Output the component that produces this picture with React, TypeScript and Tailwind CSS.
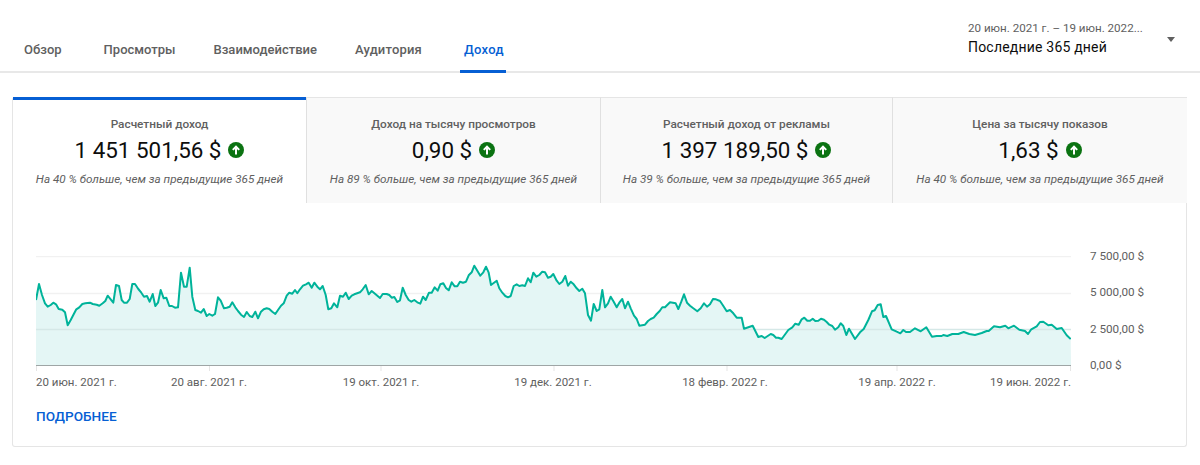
const seg1 = [[108,150],[117,102],[126,135],[135,160],[143,170],[152,165],[160,158],[168,163],[176,177],[187,179],[195,187],[203,226],[212,210],[220,195],[229,178],[238,172],[247,162],[256,160],[270,158],[278,162],[290,164],[298,167],[308,160],[316,153],[323,137],[332,148],[340,158],[348,105],[357,108],[365,150],[372,158],[381,158],[389,147],[397,102],[405,102],[415,117],[424,128],[432,140],[441,138],[449,155],[458,132],[466,168],[474,158],[482,120],[491,145],[499,143],[508,168],[516,168],[525,173],[534,172],[543,68],[552,110],[560,110],[569,53],[577,140],[586,180],[594,183],[603,188],[611,177],[620,198],[628,192],[637,197],[645,192],[654,142],[662,152],[672,175],[680,173],[689,170],[697,157],[706,172],[714,183],[723,194],[732,201],[740,186],[749,198],[757,201],[766,185],[774,205],[783,185],[791,178],[800,175],[808,177],[817,185],[826,192],[834,180],[843,167],[851,160],[860,137],[868,128],[877,131],[885,120],[892,130],[900,118],[909,107],[918,103],[926,98],[935,113],[943,98],[952,110],[960,118],[968,108],[977,135],[985,178],[994,175],[1002,160],[1012,172],[1020,137],[1029,140],[1037,128],[1046,147],[1055,137],[1063,133],[1080,127]];
const seg2 = [[8,118],[17,105],[26,133],[35,123],[45,131],[60,144],[68,132],[80,132],[88,135],[95,143],[103,141],[112,156],[120,151],[128,113],[137,135],[146,150],[154,155],[163,150],[172,157],[181,161],[189,140],[197,150],[207,128],[215,128],[224,112],[233,122],[241,103],[250,100],[258,114],[266,121],[275,97],[284,109],[292,109],[300,95],[309,98],[318,95],[326,76],[335,67],[343,47],[352,62],[361,77],[370,67],[378,50],[386,68],[393,105],[410,92],[418,115],[427,128],[436,138],[444,142],[452,138],[461,108],[470,103],[478,108],[487,106],[495,108],[504,85],[512,97],[520,68],[529,80],[538,75],[547,65],[555,67],[564,83],[572,80],[580,72],[590,92],[598,102],[607,95],[616,78],[624,107],[632,95],[641,103],[650,115],[658,123],[667,116],[675,130],[684,195],[693,212],[701,162],[710,183],[718,178],[727,120],[735,172],[744,160],[752,140],[761,155],[770,172],[778,158],[787,147],[795,175],[804,155],[812,175],[822,197],[830,207],[838,227],[855,224],[864,213],[872,207],[881,203],[890,192],[899,183],[907,172],[915,172],[930,157],[947,160],[955,177],[964,155],[972,133],[981,158],[990,167],[1000,175],[1012,184],[1022,175],[1032,160],[1041,170],[1050,163],[1059,147],[1068,148],[1080,153]];
const seg3 = [[8,165],[20,184],[30,180],[40,190],[50,203],[65,203],[72,236],[98,227],[115,261],[125,258],[134,264],[152,252],[160,255],[168,263],[175,263],[185,267],[205,240],[217,232],[226,221],[236,224],[245,208],[253,203],[262,212],[270,212],[278,206],[286,213],[295,212],[303,206],[312,209],[320,216],[328,224],[337,228],[345,239],[355,232],[362,220],[370,228],[379,255],[387,236],[405,267],[420,247],[431,237],[445,210],[456,184],[464,181],[473,165],[482,163],[490,201],[498,198],[515,238],[530,245],[541,250],[550,240],[558,246],[570,246],[585,235],[602,244],[619,232],[636,260],[650,258],[665,258],[670,255],[682,258],[697,252],[715,252],[731,246],[748,252],[765,255],[785,249],[800,243],[806,243],[822,229],[840,232],[856,227],[865,235],[882,227],[898,239],[915,243],[924,252],[934,238],[950,229],[960,216],[970,215],[985,226],[995,224],[1010,237],[1025,234],[1040,256],[1052,267]];

// traced from the screenshot, svg origin is page (36, 256)
const toPoint = (offset: number) => ([x, y]: number[]) =>
  `${(x / 3 + offset - 36).toFixed(1)},${(y / 3 - 6).toFixed(1)}`;

const linePoints = [...seg1.map(toPoint(0)), ...seg2.map(toPoint(360)), ...seg3.map(toPoint(720))].join(' ');

const navTabs = [
  { label: 'Обзор', cls: 'px-[12px] border-transparent text-[#606060]' },
  { label: 'Просмотры', cls: 'ml-[4px] px-[12px] border-transparent text-[#606060]' },
  { label: 'Взаимодействие', cls: 'px-[12px] border-transparent text-[#606060]' },
  { label: 'Аудитория', cls: 'px-[12px] tracking-[0.2px] border-transparent text-[#606060]' },
  { label: 'Доход', cls: 'ml-[12px] pl-[4px] pr-[2px] tracking-[0.3px] border-[#065fd4] text-[#065fd4]' },
];

const metrics = [
  { title: 'Расчетный доход', value: '1 451 501,56 $', note: 'На 40 % больше, чем за предыдущие 365 дней', active: true },
  { title: 'Доход на тысячу просмотров', value: '0,90 $', note: 'На 89 % больше, чем за предыдущие 365 дней', active: false },
  { title: 'Расчетный доход от рекламы', value: '1 397 189,50 $', note: 'На 39 % больше, чем за предыдущие 365 дней', active: false },
  { title: 'Цена за тысячу показов', value: '1,63 $', note: 'На 40 % больше, чем за предыдущие 365 дней', active: false },
];

const xLabels = ['20 авг. 2021 г.', '19 окт. 2021 г.', '19 дек. 2021 г.', '18 февр. 2022 г.', '19 апр. 2022 г.'];
const yLabels = ['7 500,00 $', '5 000,00 $', '2 500,00 $', '0,00 $'];
const ticks = [0.5, 173.5, 345, 518, 691, 861, 1034.5];

function UpIcon() {
  return (
    <svg width="16" height="16" viewBox="0 0 16 16" className="shrink-0">
      <circle cx="8" cy="8" r="8" fill="#0b7312" />
      <path d="M8 12.6V5M4.8 7.9 8 4.6l3.2 3.3" fill="none" stroke="#fff" strokeWidth="2" />
    </svg>
  );
}

function MetricTab({ title, value, note, active }: (typeof metrics)[number]) {
  return (
    <div
      className={
        'flex h-[106px] flex-col items-center border-l first:border-l-0 ' +
        (active
          ? 'border-t-[3px] border-t-[#065fd4] border-l-transparent bg-white pt-[16px]'
          : 'border-t border-t-[#e5e5e5] border-l-[#e0e0e0] bg-[#f9f9f9] pt-[18px]')
      }
    >
      <div className="text-[11.8px] leading-[16px] font-medium text-[#606060]">{title}</div>
      <div className="mt-[2px] flex items-center gap-[7px]">
        <span className="text-[22.4px] leading-[32px] text-[#0d0d0d]">{value}</span>
        <UpIcon />
      </div>
      <div className="mt-[5px] text-[11.7px] leading-[16px] italic text-[#606060]">{note}</div>
    </div>
  );
}

export default function App() {
  return (
    <div className="h-[465px] w-[1200px] overflow-hidden bg-white font-['Roboto',sans-serif]">
      <header className="flex h-[73px] items-end justify-between border-b-2 border-[#e8e8e8]">
        <nav className="ml-[12px] flex gap-[14px]">
          {navTabs.map((tab) => (
            <div
              key={tab.label}
              className={
                'mb-[-2px] flex h-[47px] items-start border-b-[3px] pt-[14px] text-[13px] leading-[20px] font-medium ' +
                tab.cls
              }
            >
              {tab.label}
            </div>
          ))}
        </nav>
        <div className="mr-[25px] flex h-[54px] w-[207px] items-start justify-between pt-[3px]">
          <div>
            <div className="text-[11.6px] leading-[16px] text-[#606060]">20 июн. 2021 г. – 19 июн. 2022...</div>
            <div className="mt-[1px] text-[14px] leading-[20px] tracking-[0.2px] text-[#0d0d0d]">Последние 365 дней</div>
          </div>
          <div className="mt-[17px] h-0 w-0 border-x-[4.5px] border-t-[5px] border-x-transparent border-t-[#606060]" />
        </div>
      </header>

      <section className="mx-[12px] mt-[24px] h-[350px] w-[1175px] rounded-[3px] border border-t-0 border-[#e5e5e5]">
        <div className="grid grid-cols-[293px_294px_292px_295px]">
          {metrics.map((m) => (
            <MetricTab key={m.title} {...m} />
          ))}
        </div>

        <div className="ml-[23px] mt-[53px] flex">
          <div className="w-[1035px]">
            <svg width="1035" height="116" viewBox="0 0 1035 116" className="block">
              <line x1="0" x2="1035" y1="0.5" y2="0.5" stroke="#f1f1f1" strokeWidth="1.5" />
              <line x1="0" x2="1035" y1="37.5" y2="37.5" stroke="#f1f1f1" strokeWidth="1.5" />
              <polygon points={`0,109 ${linePoints} 1035,109`} fill="#e4f6f5" />
              <line x1="0" x2="1035" y1="73.5" y2="73.5" stroke="#d5e8e7" strokeWidth="1.5" />
              <polyline points={linePoints} fill="none" stroke="#00b39a" strokeWidth="2" strokeLinejoin="round" />
              <line x1="0" x2="1035" y1="109.5" y2="109.5" stroke="#9ea5a5" strokeWidth="1" />
              {ticks.map((t) => (
                <line key={t} x1={t} x2={t} y1="110" y2="115" stroke="#e5e5e5" strokeWidth="1" />
              ))}
            </svg>
            <div className="mt-[2px] flex text-[11.5px] leading-[16px] text-[#606060]">
              <div className="w-[87px] shrink-0 whitespace-nowrap">20 июн. 2021 г.</div>
              {xLabels.map((label) => (
                <div key={label} className="w-[172px] shrink-0 text-center whitespace-nowrap">
                  {label}
                </div>
              ))}
              <div className="flex-1 text-right whitespace-nowrap">19 июн. 2022 г.</div>
            </div>
            <div className="mt-[16px] text-[13.6px] leading-[20px] font-medium text-[#065fd4]">ПОДРОБНЕЕ</div>
          </div>
          <div className="ml-[19px] -mt-[8px] flex h-[125px] flex-col justify-between text-[11.7px] leading-[16px] text-[#606060]">
            {yLabels.map((label) => (
              <div key={label}>{label}</div>
            ))}
          </div>
        </div>
      </section>
    </div>
  );
}
